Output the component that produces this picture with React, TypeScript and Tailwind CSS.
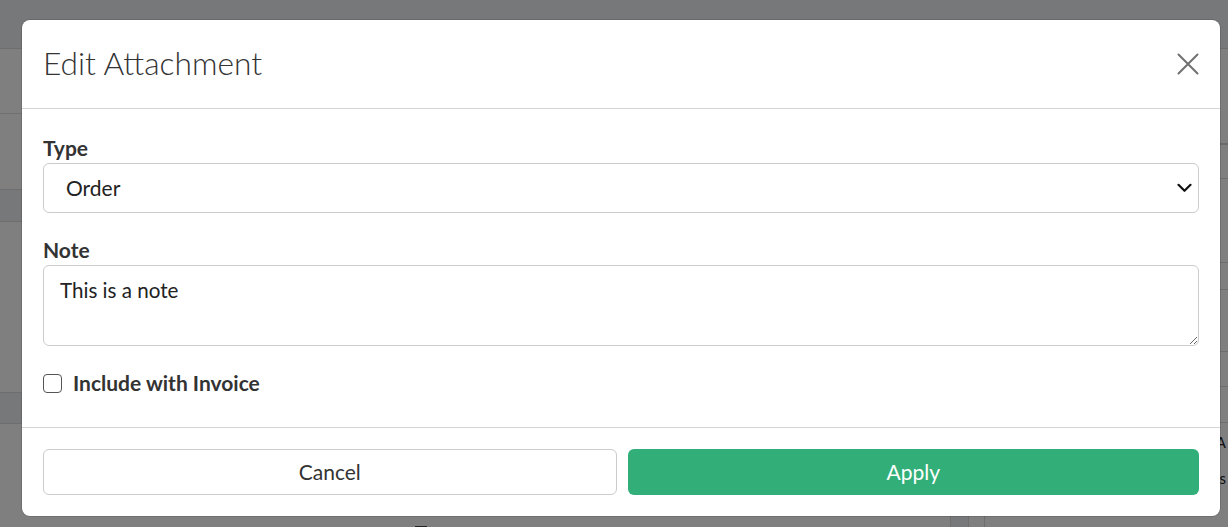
import React from 'react';

function Chevron() {
  return (
    <svg width="15" height="10" viewBox="0 0 15 10" fill="none" stroke="#111" strokeWidth="2.2" strokeLinecap="round" strokeLinejoin="round">
      <path d="M1.5 1.8 L7.5 7.8 L13.5 1.8" />
    </svg>
  );
}

function CloseIcon() {
  return (
    <svg width="22" height="22" viewBox="0 0 22 22" fill="none" stroke="#707070" strokeWidth="2" strokeLinecap="round">
      <path d="M1.5 1.5 L20.5 20.5 M20.5 1.5 L1.5 20.5" />
    </svg>
  );
}

export default function App() {
  return (
    <div className="relative h-[527px] w-full overflow-hidden bg-white font-['Lato',sans-serif]">
      {/* page underneath */}
      <div className="h-[49px] border-b border-[#dcdcdc] bg-[#eff0f3]" />
      <div className="flex h-[478px]">
        <div className="flex w-[950px] flex-col">
          <div className="h-[65px] shrink-0 border-b border-[#e0e0e0]" />
          <div className="h-[75px] shrink-0" />
          <div className="h-[33px] shrink-0 border-y border-[#dcdcdc] bg-[#eef0f4]" />
          <div className="h-[170px] shrink-0" />
          <div className="h-[32px] shrink-0 border-y border-[#dcdcdc] bg-[#eef0f4]" />
          <div className="flex shrink-0 items-center gap-[14px] pl-[415px] pt-[97px] text-[15px] text-[#222]">
            <span className="h-[12px] w-[12px] bg-[#444]" />
            <span>Reviews</span>
          </div>
        </div>
        <div className="w-[18px] border-l border-[#dcdcdc] bg-[#eef0f4]" />
        <div className="w-[16px] border-l border-[#dcdcdc]" />
        <div className="flex flex-1 flex-col border-l border-[#dcdcdc] text-[15px] text-[#222]">
          <div className="h-[96px] shrink-0 border-b-2 border-[#d4d4d4]" />
          <div className="h-[34px] shrink-0 border-b border-[#dcdcdc]" />
          <div className="h-[84px] shrink-0 border-b border-[#dcdcdc]" />
          <div className="h-[27px] shrink-0 border-b border-[#dcdcdc]" />
          <div className="h-[62px] shrink-0 border-b border-[#dcdcdc]" />
          <div className="h-[35px] shrink-0 border-b border-[#dcdcdc]" />
          <div className="h-[36px] shrink-0 border-b border-[#dcdcdc]" />
          <div className="flex flex-col items-end gap-[14px] pt-[8px] pr-[2px] leading-[22px]">
            <span>N/A</span>
            <span>Totals</span>
          </div>
        </div>
      </div>

      {/* modal */}
      <div className="absolute inset-0 bg-black/50 pl-[22px] pt-[20px]">
        <div className="w-[1198px] rounded-[8px] bg-white text-[#333] shadow-[0_0_0_1px_rgba(0,0,0,0.12)]">
          <div className="flex h-[89px] items-center justify-between border-b border-[#d4d4d4] pl-[21px] pr-[21px]">
            <h2 className="text-[31.7px] font-light leading-none text-[#333]">Edit Attachment</h2>
            <button className="flex h-[24px] w-[24px] items-center justify-end">
              <CloseIcon />
            </button>
          </div>

          <div className="border-b border-[#d4d4d4] px-[21px] pt-[27px] pb-[32px]">
            <label className="mb-[4px] block text-[21px] font-bold leading-[23px] text-[#333]">Type</label>
            <div className="flex h-[50px] items-center justify-between rounded-[6px] border border-[#cccccc] pl-[22px] pr-[6px] text-[21px] text-[#222]">
              <span>Order</span>
              <Chevron />
            </div>

            <label className="mt-[25px] mb-[4px] block text-[21px] font-bold leading-[23px] text-[#333]">Note</label>
            <textarea
              readOnly
              defaultValue="This is a note"
              className="block h-[81px] w-full rounded-[6px] border border-[#cccccc] px-[16px] pt-[12px] text-[20.6px] leading-[24px] text-[#222] outline-none"
            />

            <div className="mt-[25px] flex h-[24px] items-center gap-[11px]">
              <input
                type="checkbox"
                className="h-[19px] w-[19px] appearance-none rounded-[4px] border-[1.5px] border-[#555]"
              />
              <span className="text-[21px] font-bold text-[#333]">Include with Invoice</span>
            </div>
          </div>

          <div className="flex gap-[11px] p-[21px]">
            <button className="h-[46px] flex-1 rounded-[6px] border border-[#cccccc] bg-white text-[21px] text-[#333]">
              Cancel
            </button>
            <button className="h-[46px] flex-1 rounded-[6px] bg-[#32af79] text-[21px] text-white">
              Apply
            </button>
          </div>
        </div>
      </div>
    </div>
  );
}
